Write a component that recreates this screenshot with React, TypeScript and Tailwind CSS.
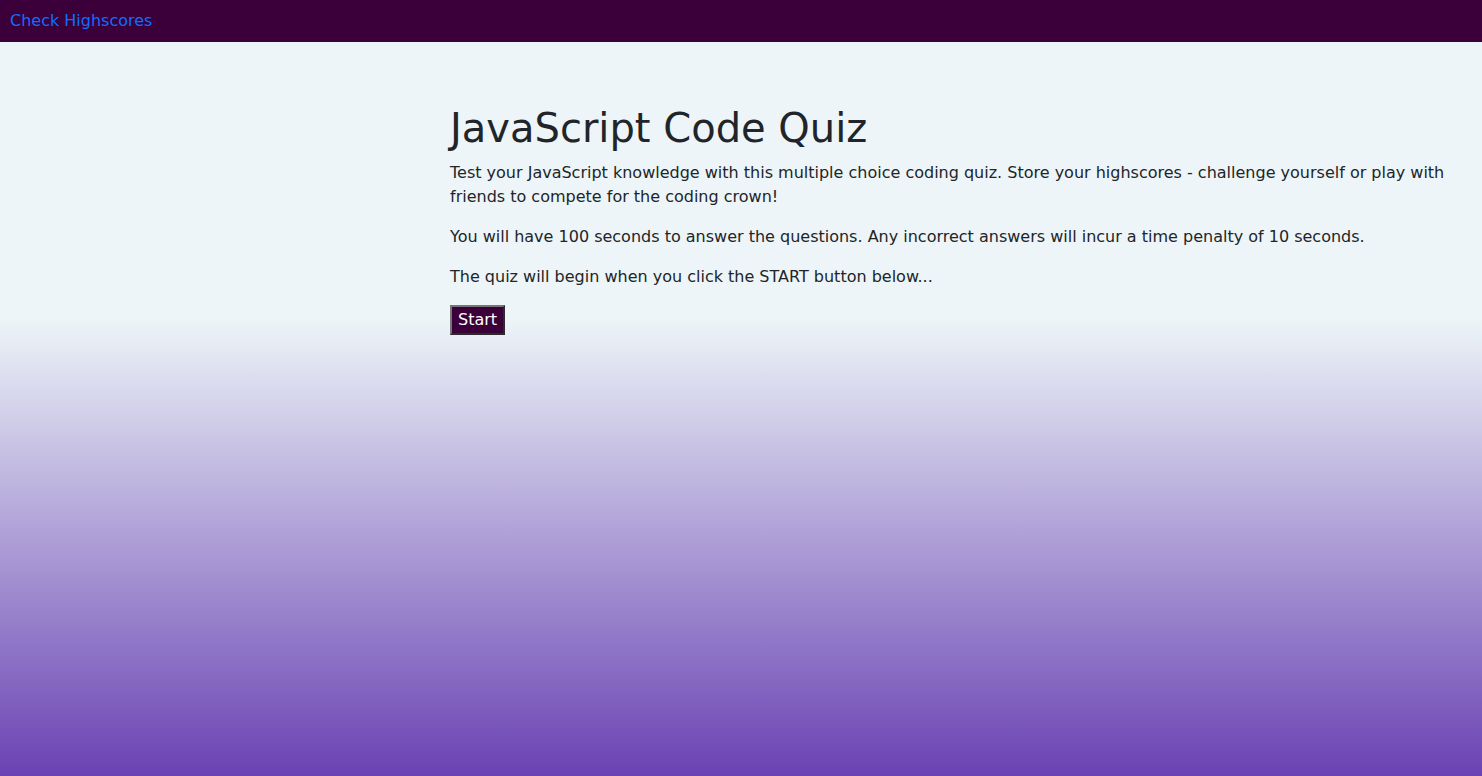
export default function App() {
  return (
    <div className="flex min-h-screen flex-col bg-[linear-gradient(#edf5f8_0%,#edf5f8_41%,#6a42b3_100%)] font-['Verdana','DejaVu_Sans',sans-serif] text-base leading-6 text-[#212529]">
      <header className="bg-[#3b0039] px-2.5 py-[9px]">
        <a href="#highscores" className="text-[#0d6efd]">
          Check Highscores
        </a>
      </header>
      <main className="ml-[450px] pt-[62px] pr-6">
        <h1 className="mb-[9px] text-[40px] leading-12">JavaScript Code Quiz</h1>
        <p className="mb-4">
          Test your JavaScript knowledge with this multiple choice coding quiz. Store your
          highscores - challenge yourself or play with friends to compete for the coding crown!
        </p>
        <p className="mb-4">
          You will have 100 seconds to answer the questions. Any incorrect answers will incur a
          time penalty of 10 seconds.
        </p>
        <p className="mb-4">The quiz will begin when you click the START button below...</p>
        <button
          type="button"
          className="border-2 border-t-[#767676] border-r-[#2b2b2b] border-b-[#2b2b2b] border-l-[#767676] bg-[#3b0039] px-1.5 py-px text-white"
        >
          Start
        </button>
      </main>
    </div>
  );
}
